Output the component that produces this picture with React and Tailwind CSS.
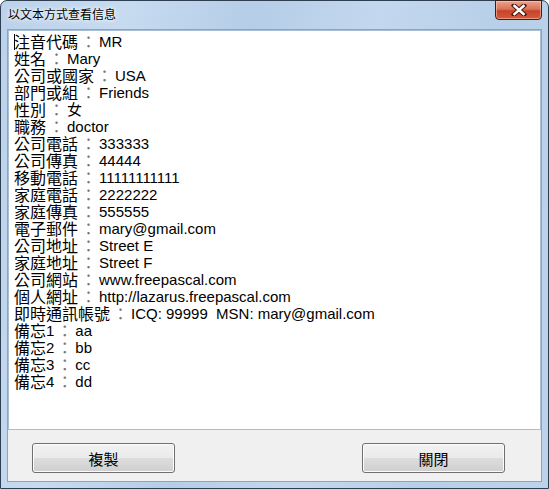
import React from "react";

const rows = [
  ["注音代碼", "MR"],
  ["姓名", "Mary"],
  ["公司或國家", "USA"],
  ["部門或組", "Friends"],
  ["性別", "女"],
  ["職務", "doctor"],
  ["公司電話", "333333"],
  ["公司傳真", "44444"],
  ["移動電話", "11111111111"],
  ["家庭電話", "2222222"],
  ["家庭傳真", "555555"],
  ["電子郵件", "mary@gmail.com"],
  ["公司地址", "Street E"],
  ["家庭地址", "Street F"],
  ["公司網站", "www.freepascal.com"],
  ["個人網址", "http://lazarus.freepascal.com"],
  ["即時通訊帳號", "ICQ: 99999  MSN: mary@gmail.com"],
  ["備忘", "aa", "1"],
  ["備忘", "bb", "2"],
  ["備忘", "cc", "3"],
  ["備忘", "dd", "4"],
];

const cjk = { fontFamily: '"Noto Sans CJK TC", "Liberation Sans", sans-serif' };

const WinButton = ({ children }) => (
  <button
    type="button"
    className="w-[143px] h-[30px] rounded-[3px] border border-[#707070] bg-[linear-gradient(to_bottom,#f2f2f2_0%,#ebebeb_49%,#dddddd_50%,#cfcfcf_100%)] shadow-[inset_0_0_0_1px_#fcfcfc] text-[15px] leading-[17px] text-black flex items-center justify-center"
    style={cjk}
  >
    {children}
  </button>
);

export default function App() {
  return (
    <div className="w-[549px] h-[489px] bg-white">
      <div className="w-full h-full flex flex-col rounded-t-[7px] border border-[#2f3f52] bg-[linear-gradient(100deg,#bcd2ea_0%,#c6dbf0_20%,#b5cde7_40%,#c3d8ee_60%,#b7cfe8_80%,#bdd3eb_100%)] px-[6px] pb-[6px]">
        {/* title bar */}
        <div className="h-[28px] flex items-start justify-between">
          <div
            className="pt-[5px] pl-[1px] text-[12px] leading-[16px] text-black [text-shadow:0_0_6px_#ffffff,0_0_3px_#ffffff]"
            style={cjk}
          >
            以文本方式查看信息
          </div>
          <div className="w-[47px] h-[20px] -mt-px rounded-b-[4px] border border-[#3d1e18] bg-[linear-gradient(to_bottom,#eba38f_0%,#dc7358_45%,#c7432a_55%,#d45a3c_100%)] shadow-[inset_0_0_0_1px_rgba(255,220,200,0.5)] flex items-center justify-center">
            <svg width="16" height="12" viewBox="0 0 16 12">
              <path d="M3 1.5 L13 10.5 M13 1.5 L3 10.5" stroke="#4a1a10" strokeWidth="4.5" strokeLinecap="square" />
              <path d="M3.5 2 L12.5 10 M12.5 2 L3.5 10" stroke="#ffffff" strokeWidth="2.5" strokeLinecap="square" />
            </svg>
          </div>
        </div>

        {/* client area */}
        <div className="flex-1 flex flex-col border border-[#8ea4bd] bg-[#f0f0f0]">
          <div className="h-[400px] border border-[#a9bdd4] bg-white pl-[5px] pt-[2px] overflow-hidden">
            {rows.map(([label, value, num], i) => (
              <div
                key={i}
                className="h-[17px] leading-[17px] whitespace-pre text-[15px] text-black flex items-center"
                style={{ fontFamily: '"Liberation Sans", "Noto Sans CJK TC", sans-serif' }}
              >
                {i === 0 && <span className="w-px h-[16px] bg-black -mr-px" />}
                <span className="text-[16px] leading-[17px]" style={cjk}>{label}</span>
                {num && <span>{num}</span>}
                <span className="w-[21px] text-center text-[16px] leading-[17px] text-[#777]" style={cjk}>：</span>
                <span>{value}</span>
              </div>
            ))}
          </div>
          <div className="flex-1 flex items-start justify-between pl-[24px] pr-[36px] pt-[13px]">
            <WinButton>複製</WinButton>
            <WinButton>關閉</WinButton>
          </div>
        </div>
      </div>
    </div>
  );
}
